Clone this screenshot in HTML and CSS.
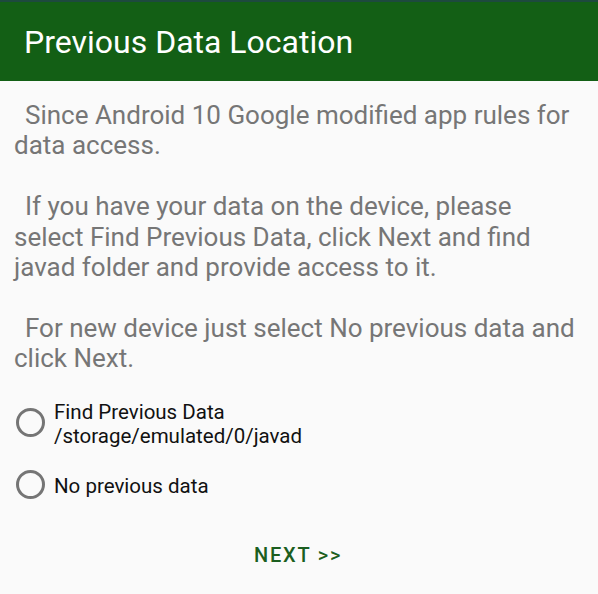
FILE: index.html
```html
<!DOCTYPE html>
<html>
<head>
<meta charset="utf-8">
<link rel="stylesheet" href="styles.css">
</head>
<body>
<div class="statusbar"></div>
<header class="appbar">
  <h1 class="title">Previous Data Location</h1>
</header>
<main class="content">
  <p class="info">&nbsp;Since Android 10 Google modified app rules for data access.</p>
  <p class="info">&nbsp;If you have your data on the device, please select Find Previous Data, click Next and find javad folder and provide access to it.</p>
  <p class="info">&nbsp;For new device just select No previous data and click Next.</p>
  <div class="options">
    <label class="option">
      <span class="radio"></span>
      <span class="option-text">Find Previous Data<br>/storage/emulated/0/javad</span>
    </label>
    <label class="option">
      <span class="radio"></span>
      <span class="option-text">No previous data</span>
    </label>
  </div>
  <div class="actions">
    <button class="next">NEXT &gt;&gt;</button>
  </div>
</main>
</body>
</html>
```
FILE: styles.css
```css
html, body {
  margin: 0;
  padding: 0;
  background: #fafafa;
  font-family: Roboto, "Noto Sans", sans-serif;
}
.statusbar {
  height: 2px;
  background: #1d4a3e;
}
.appbar {
  height: 79px;
  background: #135f15;
  display: flex;
  align-items: center;
  padding-left: 24px;
}
.title {
  margin: 0;
  font-size: 32px;
  font-weight: 400;
  color: #ffffff;
}
.content {
  padding: 0 16px 0 14px;
}
.info {
  margin: 0 0 30.4px 0;
  font-size: 26px;
  line-height: 30.4px;
  color: #767676;
  text-indent: 4.5px;
}
.content .info:first-child {
  margin-top: 19px;
}
.options {
  display: flex;
  flex-direction: column;
  gap: 25px;
  margin-top: -4px;
}
.option {
  display: flex;
  align-items: center;
  gap: 9px;
  padding-left: 2px;
}
.radio {
  width: 23px;
  height: 23px;
  border: 3px solid #757575;
  border-radius: 50%;
  flex: none;
  margin-top: -3px;
}
.option-text {
  font-size: 20.5px;
  line-height: 24px;
  color: #111;
}
.actions {
  display: flex;
  justify-content: center;
  margin-top: 44px;
}
.next {
  background: none;
  border: none;
  font-family: Roboto, sans-serif;
  font-weight: 500;
  font-size: 20px;
  letter-spacing: 1.8px;
  color: #1b5e20;
  padding: 0;
}
```
